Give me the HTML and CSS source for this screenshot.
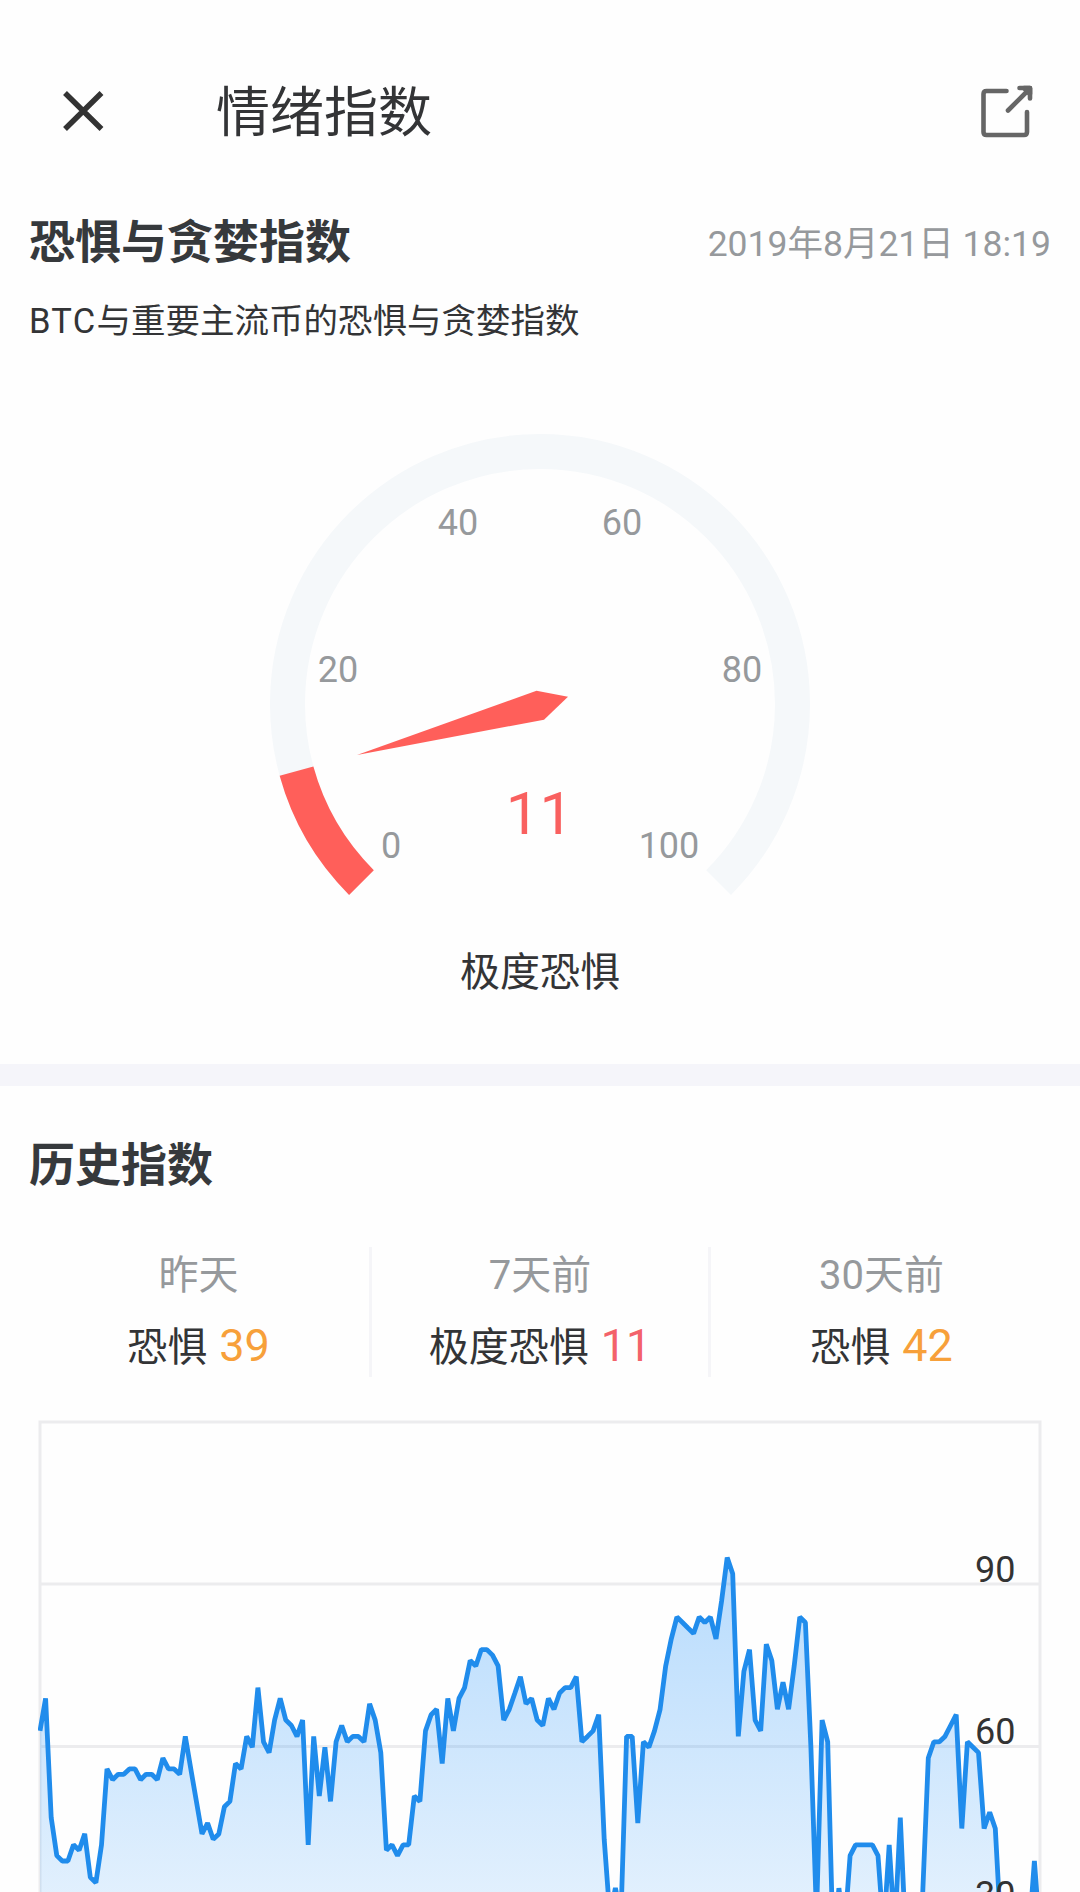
FILE: index.html
```html
<!DOCTYPE html>
<html lang="zh-CN">
<head>
    <meta charset="UTF-8">
    <meta name="viewport" content="width=device-width, initial-scale=1.0">
    <title>情绪指数</title>
    <link rel="stylesheet" href="styles.css">
</head>
<body>
    <div class="page">
        <header class="navbar">
            <svg class="icon-close" viewBox="0 0 44 44">
                <path d="M3 4L39.500 40M39.500 4L3 40"/>
            </svg>
            <h1>情绪指数</h1>
            <svg class="icon-share" viewBox="0 0 56 56">
                <path d="M26.500 6H6.500Q3.500 6 3.500 9V47Q3.500 50 6.500 50H44Q47 50 47 47V27"/>
                <path d="M28 25.500L49 4.500M39.500 3H50V13.500"/>
                <path class="head" d="M44 3H50V9Z"/>
            </svg>
        </header>

        <section class="current">
            <div class="section-head">
                <h2>恐惧与贪婪指数</h2>
                <span class="date">2019年8月21日 18:19</span>
            </div>
            <p class="subtitle"><span class="coin">BTC</span>与重要主流币的恐惧与贪婪指数</p>

            <svg class="gauge" viewBox="0 0 600 500">
                <path class="gauge-track" d="M121.450 482.550A252.500 252.500 0 1 1 478.550 482.550"/>
                <path class="gauge-value" d="M121.450 482.550A252.500 252.500 0 0 1 56.500 371.200"/>
                <polygon class="gauge-needle" points="117,355 296.500,290.700 328,296.700 304,319.700"/>
                <g class="gauge-labels">
                    <text x="151" y="457.500">0</text>
                    <text x="98" y="282">20</text>
                    <text x="218" y="135">40</text>
                    <text x="382" y="135">60</text>
                    <text x="502" y="282">80</text>
                    <text x="429" y="457.500">100</text>
                </g>
                <text class="gauge-number" x="299.500" y="434">11</text>
            </svg>
            <p class="mood">极度恐惧</p>
        </section>

        <section class="history">
            <h2>历史指数</h2>
            <div class="stats">
                <div class="stat">
                    <div class="stat-day">昨天</div>
                    <div class="stat-value">恐惧 <span class="num orange">39</span></div>
                </div>
                <div class="stat">
                    <div class="stat-day">7天前</div>
                    <div class="stat-value">极度恐惧 <span class="num red">11</span></div>
                </div>
                <div class="stat">
                    <div class="stat-day">30天前</div>
                    <div class="stat-value">恐惧 <span class="num orange">42</span></div>
                </div>
            </div>

            <svg class="chart" viewBox="0 0 1004 654">
                <defs>
                    <linearGradient id="areaFill" gradientUnits="userSpaceOnUse" x1="0" y1="130" x2="0" y2="652">
                        <stop offset="0" stop-color="#1e90fa" stop-opacity="0.32"/>
                        <stop offset="1" stop-color="#1e90fa" stop-opacity="0.03"/>
                    </linearGradient>
                </defs>
                <path class="grid" d="M2 164H1002M2 326.600H1002M2 489.200H1002"/>
                <rect class="frame" x="2" y="2" width="1000" height="650.400"/>
                <path id="area" fill="url(#areaFill)"/>
                <path id="line" class="line"/>
                <g class="axis-labels">
                    <text x="977.500" y="161.500">90</text>
                    <text x="977.500" y="324">60</text>
                    <text x="977.500" y="486.500">30</text>
                </g>
            </svg>
        </section>
    </div>

    <script>
        // Daily index values, oldest first
        const values = [
            63, 69, 47, 40, 39, 39, 42, 41, 44, 36, 35, 42, 56, 54, 55, 55, 56, 56, 54, 55,
            55, 54, 58, 56, 56, 55, 62, 56, 50, 44, 46, 43, 44, 49, 50, 57, 56, 62, 60, 71,
            61, 59, 65, 69, 65, 64, 62, 65, 42, 62, 51, 60, 50, 61, 64, 61, 62, 62, 61, 68,
            65, 59, 41, 42, 40, 42, 42, 51, 50, 63, 66, 67, 57, 69, 63, 69, 71, 76, 75, 78,
            78, 77, 75, 65, 67, 70, 73, 68, 69, 65, 64, 69, 67, 70, 71, 71, 73, 61, 62, 63,
            66, 43, 29, 34, 29, 62, 62, 46, 61, 60, 63, 67, 75, 80, 84, 83, 82, 81, 84, 83,
            84, 80, 87, 95, 92, 62, 74, 78, 65, 63, 79, 76, 67, 72, 67, 75, 84, 83, 60, 29,
            65, 61, 22, 34, 26, 40, 42, 42, 42, 42, 40, 26, 42, 26, 47, 24, 20, 22, 33, 58,
            61, 61, 62, 64, 66, 45, 61, 60, 59, 45, 48, 45, 26, 20, 18, 20, 21, 25, 39, 25
        ];

        // 0 - 120 scale inside the 1000 x 650.4 frame
        const points = values.map((v, i) => {
            const x = 2 + i * 1000 / (values.length - 1);
            const y = 2 + (120 - v) * 5.42;
            return `${x.toFixed(1)} ${y.toFixed(1)}`;
        });

        document.getElementById('line').setAttribute('d', 'M' + points.join('L'));
        document.getElementById('area').setAttribute('d', 'M' + points.join('L') + 'V652.4H2Z');
    </script>
</body>
</html>
```

FILE: styles.css
```css
* {
    margin: 0;
    padding: 0;
    box-sizing: border-box;
}

body {
    font-family: Roboto, 'Noto Sans CJK SC', sans-serif;
    background: #fefefe;
    color: #333436;
}

.page {
    width: 1080px;
    height: 1892px;
    overflow: hidden;
}

svg {
    display: block;
}

.navbar {
    display: flex;
    align-items: center;
    height: 204px;
    padding: 20px 44px 0 62px;
}

.navbar h1 {
    flex: 1;
    margin-left: 110px;
    padding-top: 4px;
    font-size: 54px;
    font-weight: 400;
    line-height: 80px;
}

.icon-close {
    width: 44px;
    height: 44px;
    margin-top: -3px;
    fill: none;
    stroke: #333;
    stroke-width: 5.5;
}

.icon-share {
    width: 56px;
    height: 56px;
    margin-top: 2px;
    fill: none;
    stroke: #666;
    stroke-width: 4.6;
    stroke-linecap: round;
    stroke-linejoin: round;
}

.icon-share .head {
    fill: #666;
}

h2 {
    font-size: 46px;
    font-weight: 700;
    line-height: 76px;
    color: #36393c;
}

.current {
    height: 860px;
}

.section-head {
    display: flex;
    align-items: center;
    justify-content: space-between;
    padding: 0 29px;
}

.date {
    padding-top: 3px;
    font-size: 35.5px;
    line-height: 72px;
    color: #96999c;
}

.subtitle {
    margin-top: 19px;
    padding-left: 29px;
    font-size: 34.5px;
    line-height: 44px;
}

.coin {
    letter-spacing: 1.3px;
}

.gauge {
    width: 600px;
    height: 500px;
    margin: 57px auto 0;
}

.gauge-track,
.gauge-value {
    fill: none;
    stroke-width: 35;
}

.gauge-track {
    stroke: #f5f8fa;
}

.gauge-value {
    stroke: #ff5f5a;
}

.gauge-needle {
    fill: #ff5f5a;
}

.gauge-labels text {
    font-size: 36px;
    fill: #96999c;
    text-anchor: middle;
}

.gauge-number {
    font-size: 60px;
    fill: #f9605f;
    text-anchor: middle;
}

.mood {
    margin-top: 43px;
    font-size: 40px;
    line-height: 60px;
    text-align: center;
}

.history {
    padding-top: 59px;
    border-top: 22px solid #f5f5fa;
}

.history h2 {
    padding-left: 29px;
    line-height: 40px;
}

.stats {
    display: grid;
    grid-template-columns: 341px 342px 341px;
    margin: 62px 28px 0;
}

.stat {
    height: 130px;
    text-align: center;
}

.stat:nth-child(2) {
    border-left: 3px solid #f5f5f8;
    border-right: 3px solid #f5f5f8;
}

.stat-day {
    font-size: 40px;
    line-height: 58px;
    color: #96999c;
}

.stat-value {
    margin-top: 12px;
    font-size: 40px;
    line-height: 58px;
}

.num {
    margin-left: 2px;
    font-size: 45px;
}

.orange {
    color: #f7a03a;
}

.red {
    color: #f3626a;
}

.chart {
    width: 1004px;
    height: 654px;
    margin: 43px auto 0;
}

.grid,
.frame {
    fill: none;
    stroke: #ececee;
    stroke-width: 3;
}

.line {
    fill: none;
    stroke: #208cec;
    stroke-width: 4.8;
    stroke-linejoin: bevel;
}

.axis-labels text {
    font-size: 36px;
    fill: #333;
    text-anchor: end;
}
```
